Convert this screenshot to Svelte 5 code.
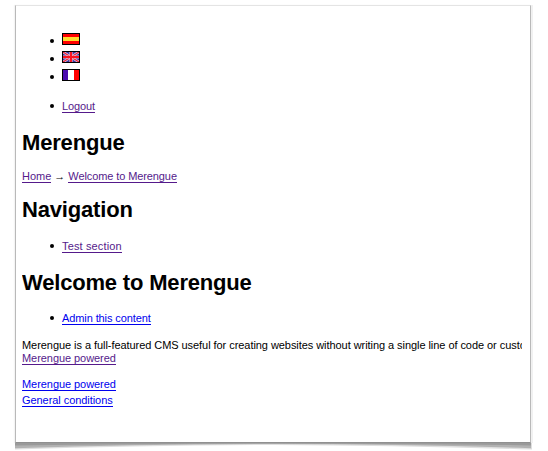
<script>
  const languages = ['es', 'en', 'fr'];
</script>

<div class="stage">
  <div class="card">
    <div class="page">
      <ul class="languages">
        {#each languages as lang}
          <li>
            <svg class="flag" viewBox="0 0 18 12" width="18" height="12" shape-rendering={lang === 'en' ? 'auto' : 'crispEdges'}>
              {#if lang === 'es'}
                <rect width="18" height="12" fill="#f00" />
                <rect y="4" width="18" height="4" fill="#ffdb2e" />
              {:else if lang === 'en'}
                <rect width="18" height="12" fill="#3a35a0" />
                <path d="M1 1L17 11M17 1L1 11" stroke="#d8d0ec" stroke-width="2.6" />
                <path d="M1 1L17 11M17 1L1 11" stroke="#f01c30" stroke-width="1.3" />
                <path d="M9 1V11M1 6H17" stroke="#efb4c4" stroke-width="3.2" />
                <path d="M9 1V11M1 6H17" stroke="#fa1420" stroke-width="2" />
              {:else}
                <rect width="18" height="12" fill="#fff" />
                <rect width="6" height="12" fill="#4b0bb0" />
                <rect x="12" width="6" height="12" fill="#f00" />
              {/if}
              <rect x="0.5" y="0.5" width="17" height="11" fill="none" stroke="#000" />
            </svg>
          </li>
        {/each}
      </ul>
      <ul class="account"><li><a class="visited" href="#logout">Logout</a></li></ul>
      <h1 class="site">Merengue</h1>
      <div class="crumbs"><a class="visited" href="#home">Home</a><span class="arrow">→</span><a class="visited trail" href="#welcome">Welcome to Merengue</a></div>
      <h1 class="nav">Navigation</h1>
      <ul class="sections"><li><a class="visited" href="#test">Test section</a></li></ul>
      <h1 class="welcome">Welcome to Merengue</h1>
      <ul class="admin"><li><a href="#admin">Admin this content</a></li></ul>
      <p>Merengue is a full-featured CMS useful for creating websites without writing a single line of code or custo</p>
      <div class="powered"><a class="visited" href="#powered">Merengue powered</a></div>
      <footer>
        <div><a href="#merengue">Merengue powered</a></div>
        <div><a href="#conditions">General conditions</a></div>
      </footer>
    </div>
  </div>
  <svg class="shadow" width="518" height="8" viewBox="0 0 518 8">
    <path d="M0 0H517V6.6Q390 2.3 258 1.9Q126 2.3 0 6.6Z" fill="#dfdfdf" />
    <path d="M0 0H516V5.2Q390 1.3 258 1Q126 1.3 0 5.2Z" fill="#b2b2b2" />
    <path d="M0 0H516V2.4Q390 0.6 258 0.4Q126 0.6 0 2.4Z" fill="#9a9a9a" />
  </svg>
</div>

<style>
  :global(body) {
    margin: 0;
    background: #fff;
  }
  .stage {
    box-sizing: border-box;
    width: 548px;
    height: 451px;
    padding: 5px 0 0 15px;
  }
  .card {
    box-sizing: border-box;
    width: 516px;
    height: 438px;
    border: 1px solid #b9b9b9;
    border-top-color: #e4e4e4;
    border-bottom-color: #909090;
    box-shadow: 2px 0 0 #f1f1f1, -1px 0 1px #f4f4f4;
    background: #fff;
    font: 11px/12px "Liberation Sans", Arial, sans-serif;
    color: #000;
  }
  .page {
    width: 500px;
    padding: 27px 0 4px;
    margin-left: 6px;
    overflow: hidden;
  }
  ul {
    list-style: none;
    margin: 0;
    padding: 0 0 0 40px;
  }
  li {
    position: relative;
    height: 12px;
  }
  li::before {
    content: "";
    position: absolute;
    left: -12px;
    top: 4px;
    width: 4px;
    height: 4px;
    border-radius: 50%;
    background: #000;
  }
  .languages li {
    height: 18px;
  }
  .languages li::before {
    top: 6px;
  }
  .flag {
    display: block;
  }
  .account {
    margin-top: 13px;
    letter-spacing: -0.12px;
  }
  h1 {
    font-size: 22px;
    line-height: 25px;
    font-weight: 700;
    letter-spacing: -0.18px;
    margin: 0;
  }
  .site {
    margin-top: 18px;
  }
  .crumbs,
  .nav {
    margin-top: 15px;
  }
  .trail {
    letter-spacing: -0.1px;
  }
  .sections,
  .welcome {
    margin-top: 18px;
  }
  .sections {
    letter-spacing: 0.14px;
  }
  .admin {
    margin-top: 17px;
    letter-spacing: -0.1px;
  }
  a {
    color: #00e;
    text-decoration: none;
    border-bottom: 1px solid currentColor;
  }
  a.visited {
    color: #551a8b;
  }
  .arrow {
    display: inline-block;
    width: 17px;
    height: 12px;
    text-align: center;
    vertical-align: top;
  }
  p {
    margin: 15px 0 0;
    white-space: nowrap;
    letter-spacing: -0.058px;
  }
  .powered {
    margin-top: 1px;
    letter-spacing: -0.06px;
  }
  footer {
    display: flex;
    flex-direction: column;
    gap: 4px;
    margin-top: 14px;
    letter-spacing: -0.06px;
  }
  .shadow {
    display: block;
  }
</style>
